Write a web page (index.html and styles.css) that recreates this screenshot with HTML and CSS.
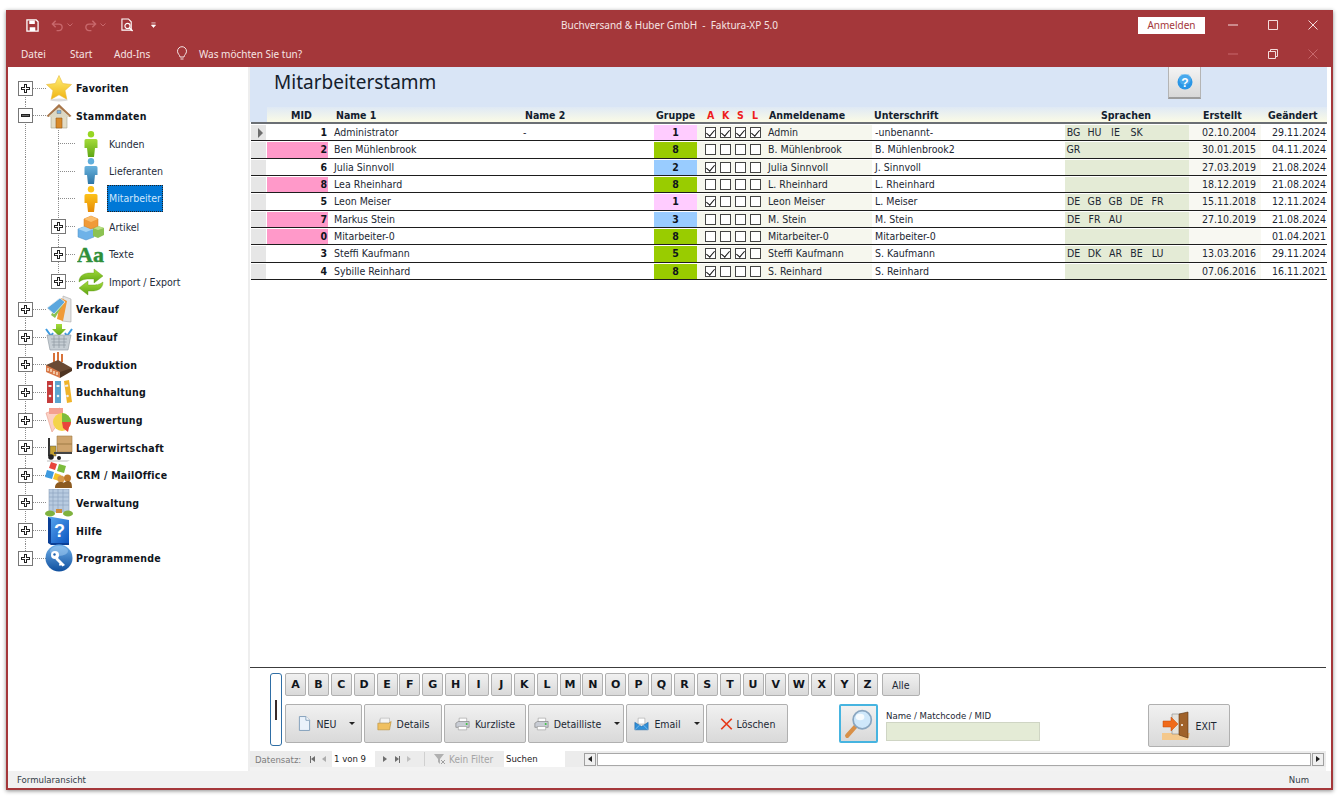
FILE: index.html
```html
<!DOCTYPE html>
<html lang="de">
<head>
<meta charset="utf-8">
<title>Faktura-XP 5.0</title>
<link rel="stylesheet" href="styles.css">
</head>
<body>
<svg class="defs" width="0" height="0" aria-hidden="true">
  <defs>
    <linearGradient id="gGold" x1="0" y1="0" x2="0" y2="1"><stop offset="0" stop-color="#fff07a"/><stop offset="1" stop-color="#f0b412"/></linearGradient>
    <linearGradient id="gGreen" x1="0" y1="0" x2="0" y2="1"><stop offset="0" stop-color="#a5dc3a"/><stop offset="1" stop-color="#5ea514"/></linearGradient>
    <linearGradient id="gBlue" x1="0" y1="0" x2="0" y2="1"><stop offset="0" stop-color="#68b2dd"/><stop offset="1" stop-color="#2f76a6"/></linearGradient>
    <linearGradient id="gOrange" x1="0" y1="0" x2="0" y2="1"><stop offset="0" stop-color="#fcc21a"/><stop offset="1" stop-color="#e58a05"/></linearGradient>
    <linearGradient id="gSphere" x1="0" y1="0" x2="0" y2="1"><stop offset="0" stop-color="#6fb0ea"/><stop offset="1" stop-color="#0f4f9e"/></linearGradient>
    <linearGradient id="gBook" x1="0" y1="0" x2="1" y2="1"><stop offset="0" stop-color="#58a8f0"/><stop offset="1" stop-color="#0d54c0"/></linearGradient>
  </defs>
</svg>

<div class="window">
  <header class="titlebar">
    <div class="title-row">
      <div class="qat">
        <svg class="qi qi-save" viewBox="0 0 14 14"><path d="M1 1h10l2 2v10H1z" fill="none" stroke="#fff" stroke-width="1.4"/><path d="M3.5 1.5h6v4h-6zM4 9h6v4H4z" fill="#fff"/></svg>
        <svg class="qi qi-undo" viewBox="0 0 14 14"><path d="M5 2 1.5 5.5 5 9M2 5.5h6.5a3.5 3.5 0 0 1 0 7H6" fill="none" stroke="#c8686c" stroke-width="1.5"/></svg>
        <svg class="qi-caret" viewBox="0 0 6 4"><path d="M.5.5 3 3 5.500.5" fill="none" stroke="#c8686c"/></svg>
        <svg class="qi qi-redo" viewBox="0 0 14 14"><path d="M9 2l3.500 3.500L9 9M12 5.500H5.500a3.500 3.500 0 0 0 0 7H8" fill="none" stroke="#c8686c" stroke-width="1.5"/></svg>
        <svg class="qi-caret" viewBox="0 0 6 4"><path d="M.5.5 3 3 5.500.5" fill="none" stroke="#c8686c"/></svg>
        <svg class="qi qi-prev" viewBox="0 0 14 15"><path d="M1 1h7l3 3v9H1z" fill="none" stroke="#fff" stroke-width="1.200"/><circle cx="7" cy="8.500" r="2.800" fill="none" stroke="#fff" stroke-width="1.200"/><path d="m9 10.500 3.500 3.500" stroke="#fff" stroke-width="1.600"/></svg>
        <svg class="qi-more" viewBox="0 0 6 7"><path d="M.5 1h5M.5 3.500h5L3 6.500z" fill="#fff" stroke="#fff" stroke-width=".8"/></svg>
      </div>
      <div class="app-title">Buchversand &amp; Huber GmbH&nbsp; -&nbsp; Faktura-XP 5.0</div>
      <div class="win-right">
        <span class="signin">Anmelden</span>
        <div class="win-ctrls">
          <svg class="wc" viewBox="0 0 12 12"><path d="M1 6h10" stroke="#f4dcdc"/></svg>
          <svg class="wc" viewBox="0 0 12 12"><path d="M1.500 1.500h9v9h-9z" fill="none" stroke="#f4dcdc"/></svg>
          <svg class="wc" viewBox="0 0 12 12"><path d="m1.500 1.500 9 9m0-9-9 9" stroke="#f4dcdc"/></svg>
        </div>
      </div>
    </div>
    <div class="menu-row">
      <nav class="menu">
        <span class="menu-item m-datei">Datei</span>
        <span class="menu-item m-start">Start</span>
        <span class="menu-item m-add">Add-Ins</span>
        <svg class="bulb" viewBox="0 0 12 15"><path d="M4 11c0-2-2.500-3-2.500-5.800a4.500 4.500 0 0 1 9 0C10.500 8 8 9 8 11zM4.500 13h3" fill="none" stroke="#f4e4e4"/></svg>
        <span class="menu-item">Was möchten Sie tun?</span>
      </nav>
      <div class="win-ctrls">
        <svg class="wc" viewBox="0 0 12 12"><path d="M1 6h10" stroke="#c8686c"/></svg>
        <svg class="wc" viewBox="0 0 12 12"><path d="M1.500 3.500h7v7h-7zM3.500 3.500v-2h7v7h-2" fill="none" stroke="#f4dcdc"/></svg>
        <svg class="wc" viewBox="0 0 12 12"><path d="m1.500 1.500 9 9m0-9-9 9" stroke="#c8686c"/></svg>
      </div>
    </div>
  </header>

  <div class="body-row">
    <aside class="tree">
      <div class="tr first">
        <div class="trunk"><span class="tg plus"></span></div>
        <svg class="ico" viewBox="0 0 28 28"><ellipse cx="14" cy="26" rx="9" ry="1.500" fill="#ddd"/><path d="m14 1.500 3.700 8 8.800 1-6.500 6 1.800 8.700-7.800-4.400-7.800 4.400L8 16.500l-6.500-6 8.800-1z" fill="url(#gGold)" stroke="#e8b83a" stroke-width=".6"/></svg>
        <span class="lbl">Favoriten</span>
      </div>
      <div class="tr">
        <div class="trunk"><span class="tg minus"></span></div>
        <svg class="ico" viewBox="0 0 28 28"><path d="M6 12h16v14H6z" fill="#e2dcc6" stroke="#a9a58e" stroke-width=".6"/><path d="M1.500 14 14 2l12.500 12-2 1L14 5.500 3.500 15z" fill="#a8764a"/><path d="M14 5.500 24 14v1H4v-1z" fill="#dcd8c4"/><path d="M11 16h6v10h-6z" fill="#d98a2a" stroke="#96591a" stroke-width=".6"/><path d="M12 8.500h4v3h-4z" fill="#7ab0dd" stroke="#666" stroke-width=".4"/></svg>
        <span class="lbl">Stammdaten</span>
      </div>

      <div class="tr">
        <div class="trunk line"></div><div class="branch"></div>
        <svg class="person" viewBox="0 0 14 26"><circle cx="7" cy="3.300" r="3.200" fill="#97d623"/><path d="M2 8h10q1.500 0 1.500 1.500V17H11l-1 9H4l-1-9H.5V9.500Q.5 8 2 8z" fill="url(#gGreen)"/></svg>
        <span class="txt">Kunden</span>
      </div>
      <div class="tr">
        <div class="trunk line"></div><div class="branch"></div>
        <svg class="person" viewBox="0 0 14 26"><circle cx="7" cy="3.300" r="3.200" fill="#60aedb"/><path d="M2 8h10q1.500 0 1.500 1.500V17H11l-1 9H4l-1-9H.5V9.500Q.5 8 2 8z" fill="url(#gBlue)"/></svg>
        <span class="txt">Lieferanten</span>
      </div>
      <div class="tr">
        <div class="trunk line"></div><div class="branch"></div>
        <svg class="person" viewBox="0 0 14 26"><circle cx="7" cy="3.300" r="3.200" fill="#fcc21a"/><path d="M2 8h10q1.500 0 1.500 1.500V17H11l-1 9H4l-1-9H.5V9.500Q.5 8 2 8z" fill="url(#gOrange)"/></svg>
        <span class="txt selected">Mitarbeiter</span>
      </div>
      <div class="tr">
        <div class="trunk line"></div><div class="branch tgcell"><span class="tg plus"></span></div>
        <svg class="ico ico2" viewBox="0 0 28 28"><path d="M1 16 9 13l8 3v8l-8 3-8-3z" fill="#6eb2e8" stroke="#4a8cc4" stroke-width=".5"/><path d="m1 16 8 3 8-3-8-3z" fill="#a6d4f4"/><path d="m16 15 5-2 6 2v7l-6 3-5-2z" fill="#8cc252"/><path d="m16 15 5 2 6-2-6-2z" fill="#bcdf86"/><path d="m7 6 7-3 7 3v7l-7 3-7-3z" fill="#f09a38" stroke="#d07a18" stroke-width=".5"/><path d="m7 6 7 3 7-3-7-3z" fill="#fbbd6a"/></svg>
        <span class="txt">Artikel</span>
      </div>
      <div class="tr">
        <div class="trunk line"></div><div class="branch tgcell"><span class="tg plus"></span></div>
        <svg class="ico ico2" viewBox="0 0 28 28"><text class="aa" x="0" y="22">Aa</text></svg>
        <span class="txt">Texte</span>
      </div>
      <div class="tr">
        <div class="trunk line"></div><div class="branch tgcell last"><span class="tg plus"></span></div>
        <svg class="ico ico2" viewBox="0 0 28 28"><path d="M2 14C2 7 8 5 13 5h4V1l9 7-9 7v-4h-4c-4 0-7 0-11 3z" fill="url(#gGreen)" stroke="#5f9a12" stroke-width=".4"/><path d="M26 14c0 7-6 9-11 9h-4v4l-9-7 9-7v4h4c4 0 7 0 11-3z" fill="url(#gGreen)" stroke="#5f9a12" stroke-width=".4"/></svg>
        <span class="txt">Import / Export</span>
      </div>

      <div class="tr">
        <div class="trunk"><span class="tg plus"></span></div>
        <svg class="ico" viewBox="0 0 28 28"><path d="M18 1l8 3v23l-9-1z" fill="#e4e4e4" stroke="#aaa" stroke-width=".6"/><path d="m16 3 6 3-4 20-6-2z" fill="#f09a38"/><path d="m14 5 5 3-9 15-4-3z" fill="#8cc252"/><path d="M15 3 20 7 9 19 2 13z" fill="#5ba7de" stroke="#eee" stroke-width=".8"/></svg>
        <span class="lbl">Verkauf</span>
      </div>
      <div class="tr">
        <div class="trunk"><span class="tg plus"></span></div>
        <svg class="ico" viewBox="0 0 28 28"><path d="m1 6 5 7 2-3M27 6l-5 7-2-3" fill="none" stroke="#3d9ae0" stroke-width="2"/><path d="M11 1h6v5h4l-7 7-7-7h4z" fill="url(#gGreen)"/><path d="M2 12h24l-3 15H5z" fill="#c6ced4" stroke="#8b959d" stroke-width=".6"/><path d="M6 16h16M6.500 19h15M7 22h14M9 13v12m5-12v12m5-12v12" stroke="#8e98a0" stroke-width=".7"/></svg>
        <span class="lbl">Einkauf</span>
      </div>
      <div class="tr">
        <div class="trunk"><span class="tg plus"></span></div>
        <svg class="ico" viewBox="0 0 28 28"><path d="M8 2h2v9H8zm4-1h2v9h-2zm4 2h2v8h-2z" fill="#d8733a"/><path d="m1 14 12-5 14 8-12 8-14-5z" fill="#6a4a34"/><path d="M1 14v7l14 6v-6z" fill="#d87a4a"/><path d="m15 27 12-7v-3l-12 4z" fill="#4f3523"/><path d="M3 17v3m3-2v3m3-1v3m3-2v3" stroke="#fbe4c8" stroke-width="1.400"/></svg>
        <span class="lbl">Produktion</span>
      </div>
      <div class="tr">
        <div class="trunk"><span class="tg plus"></span></div>
        <svg class="ico" viewBox="0 0 28 28"><path d="M2 3h6v22H2z" fill="#c43c3c"/><path d="M10 3h6v22h-6z" fill="#5ba4cf"/><path d="m19 3 5-1 3 22-5 1z" fill="#f0b428"/><path d="M3.500 7h3v2h-3zM11.500 7h3v2h-3zM20 7l3-.500.300 2-3 .500z" fill="#eee"/><circle cx="5" cy="18" r="1.300" fill="#eee"/><circle cx="13" cy="18" r="1.300" fill="#eee"/><circle cx="22.500" cy="18" r="1.300" fill="#eee"/></svg>
        <span class="lbl">Buchhaltung</span>
      </div>
      <div class="tr">
        <div class="trunk"><span class="tg plus"></span></div>
        <svg class="ico" viewBox="0 0 28 28"><path d="m1 7 14-5 3 9-11 15z" fill="#fbd0c4" stroke="#e89a88" stroke-width=".6"/><path d="M4 2h14v6H4z" fill="#f4a090"/><circle cx="17" cy="16" r="9" fill="#f4d44a"/><path d="M17 16V7a9 9 0 0 1 9 9z" fill="#7cbc3c"/><path d="M17 16h9a9 9 0 0 1-2 5.500l-1 4.500-5-4z" fill="#e8453c"/></svg>
        <span class="lbl">Auswertung</span>
      </div>
      <div class="tr">
        <div class="trunk"><span class="tg plus"></span></div>
        <svg class="ico" viewBox="0 0 28 28"><path d="M2 26h23l-3 2H2z" fill="#ddd"/><path d="M12 2h15v8H12zM12 10h15v8H12z" fill="#cfa56e" stroke="#a37c48" stroke-width=".6"/><path d="M3 4h2v18H3z" fill="#333"/><path d="M5 12h6v10H5z" fill="#c4a030" stroke="#555" stroke-width=".5"/><path d="M9 18h18v2H9z" fill="#444"/><circle cx="6" cy="23" r="2.800" fill="#222"/><circle cx="14" cy="24" r="2" fill="#222"/></svg>
        <span class="lbl">Lagerwirtschaft</span>
      </div>
      <div class="tr">
        <div class="trunk"><span class="tg plus"></span></div>
        <svg class="ico" viewBox="0 0 28 28"><path d="m6 1 6 2-2 6-6-2z" fill="#e8453c"/><path d="m14 3 7 2-2 7-7-2z" fill="#7cbc3c"/><path d="m2 9 7 2-2 7-7-2z" fill="#3d9ae0"/><path d="m10 12 6 2-2 6-6-2z" fill="#f4c428"/><circle cx="16" cy="18" r="3.500" fill="#d89a4a"/><circle cx="22.500" cy="17" r="3.500" fill="#c07a2a"/><path d="M10 27c0-5 3-6 6-6s4 1 4 6zM17 27c0-5 3-7 6-7s4 2 4 7z" fill="#8c5a20"/></svg>
        <span class="lbl">CRM / MailOffice</span>
      </div>
      <div class="tr">
        <div class="trunk"><span class="tg plus"></span></div>
        <svg class="ico" viewBox="0 0 28 28"><path d="M4 0h20v23H4z" fill="#b8cbe0" stroke="#8ea2b8" stroke-width=".6"/><path d="M8 0v22m5-22v22m5-22v22M4 4h20M4 8h20M4 12h20M4 16h20" stroke="#8da5c0" stroke-width=".7"/><path d="M11 20h6v4h-6z" fill="#cf8a3a"/><ellipse cx="5" cy="24.500" rx="5" ry="3" fill="#7fb23f"/><ellipse cx="23" cy="24.500" rx="5" ry="3" fill="#7fb23f"/></svg>
        <span class="lbl">Verwaltung</span>
      </div>
      <div class="tr">
        <div class="trunk"><span class="tg plus"></span></div>
        <svg class="ico" viewBox="0 0 28 28"><path d="M3 0h4l17 3v23L3 26z" fill="url(#gBook)"/><path d="M3 0v26l3 2h18v-2H6V2z" fill="#0a3f96"/><text class="qm" x="9" y="20">?</text></svg>
        <span class="lbl">Hilfe</span>
      </div>
      <div class="tr lastrow">
        <div class="trunk"><span class="tg plus"></span></div>
        <svg class="ico" viewBox="0 0 28 28"><circle cx="14" cy="14" r="13.500" fill="url(#gSphere)"/><ellipse cx="14" cy="7" rx="9" ry="5" fill="#a8d0f4" opacity=".5"/><circle cx="10" cy="11" r="4" fill="#fff"/><path d="m12 13 8 8-2.500 1.500-1.500-1.500-1 1-1-1 .5-1.500-4-4z" fill="#fff"/><circle cx="9.500" cy="10.500" r="1.200" fill="#1c62b0"/></svg>
        <span class="lbl">Programmende</span>
      </div>
    </aside>

    <main class="main">
      <section class="band">
        <div class="band-top">
          <h1 class="page-title">Mitarbeiterstamm</h1>
          <button class="help-btn"><svg class="help-ico" viewBox="0 0 16 16"><circle cx="8" cy="8" r="7.500" fill="#2a96e6"/><circle cx="8" cy="5" r="6" fill="#66bcf4" opacity=".5"/><text class="help-q" x="8" y="12.500">?</text></svg></button>
        </div>
        <div class="row head">
          <span class="c-sel-h"></span>
          <span class="hd h-mid">MID</span>
          <span class="hd h-n1">Name 1</span>
          <span class="hd h-n2">Name 2</span>
          <span class="hd h-grp">Gruppe</span>
          <span class="hd h-aksl"><b>A</b><b>K</b><b>S</b><b>L</b></span>
          <span class="hd h-an">Anmeldename</span>
          <span class="hd h-un">Unterschrift</span>
          <span class="hd h-sp">Sprachen</span>
          <span class="hd h-er">Erstellt</span>
          <span class="hd h-ge">Geändert</span>
        </div>
      </section>

      <section class="table">
        <div class="row data">
          <span class="c-sel"><i class="arrow"></i></span><span class="c-mid">1</span><span class="c-n1">Administrator</span><span class="c-n2">-</span><span class="c-grp g-p">1</span>
          <span class="c-cb"><i class="cb on"></i><i class="cb on"></i><i class="cb on"></i><i class="cb on"></i></span><span class="c-an">Admin</span><span class="c-un">-unbenannt-</span>
          <span class="c-sp"><em>BG</em><em>HU</em><em>IE</em><em>SK</em></span><span class="c-er">02.10.2004</span><span class="c-ge">29.11.2024</span>
        </div>
        <div class="row data">
          <span class="c-sel"></span><span class="c-mid pink">2</span><span class="c-n1">Ben Mühlenbrook</span><span class="c-n2"></span><span class="c-grp g-g">8</span>
          <span class="c-cb"><i class="cb"></i><i class="cb"></i><i class="cb"></i><i class="cb"></i></span><span class="c-an">B. Mühlenbrook</span><span class="c-un">B. Mühlenbrook2</span>
          <span class="c-sp"><em>GR</em></span><span class="c-er">30.01.2015</span><span class="c-ge">04.11.2024</span>
        </div>
        <div class="row data">
          <span class="c-sel"></span><span class="c-mid">6</span><span class="c-n1">Julia Sinnvoll</span><span class="c-n2"></span><span class="c-grp g-b">2</span>
          <span class="c-cb"><i class="cb on"></i><i class="cb"></i><i class="cb"></i><i class="cb"></i></span><span class="c-an">Julia Sinnvoll</span><span class="c-un">J. Sinnvoll</span>
          <span class="c-sp"></span><span class="c-er">27.03.2019</span><span class="c-ge">21.08.2024</span>
        </div>
        <div class="row data">
          <span class="c-sel"></span><span class="c-mid pink">8</span><span class="c-n1">Lea Rheinhard</span><span class="c-n2"></span><span class="c-grp g-g">8</span>
          <span class="c-cb"><i class="cb"></i><i class="cb"></i><i class="cb"></i><i class="cb"></i></span><span class="c-an">L. Rheinhard</span><span class="c-un">L. Rheinhard</span>
          <span class="c-sp"></span><span class="c-er">18.12.2019</span><span class="c-ge">21.08.2024</span>
        </div>
        <div class="row data">
          <span class="c-sel"></span><span class="c-mid">5</span><span class="c-n1">Leon Meiser</span><span class="c-n2"></span><span class="c-grp g-p">1</span>
          <span class="c-cb"><i class="cb on"></i><i class="cb"></i><i class="cb"></i><i class="cb"></i></span><span class="c-an">Leon Meiser</span><span class="c-un">L. Meiser</span>
          <span class="c-sp"><em>DE</em><em>GB</em><em>GB</em><em>DE</em><em>FR</em></span><span class="c-er">15.11.2018</span><span class="c-ge">12.11.2024</span>
        </div>
        <div class="row data">
          <span class="c-sel"></span><span class="c-mid pink">7</span><span class="c-n1">Markus Stein</span><span class="c-n2"></span><span class="c-grp g-b">3</span>
          <span class="c-cb"><i class="cb"></i><i class="cb"></i><i class="cb"></i><i class="cb"></i></span><span class="c-an">M. Stein</span><span class="c-un">M. Stein</span>
          <span class="c-sp"><em>DE</em><em>FR</em><em>AU</em></span><span class="c-er">27.10.2019</span><span class="c-ge">21.08.2024</span>
        </div>
        <div class="row data">
          <span class="c-sel"></span><span class="c-mid pink">0</span><span class="c-n1">Mitarbeiter-0</span><span class="c-n2"></span><span class="c-grp g-g">8</span>
          <span class="c-cb"><i class="cb"></i><i class="cb"></i><i class="cb"></i><i class="cb"></i></span><span class="c-an">Mitarbeiter-0</span><span class="c-un">Mitarbeiter-0</span>
          <span class="c-sp"></span><span class="c-er"></span><span class="c-ge">01.04.2021</span>
        </div>
        <div class="row data">
          <span class="c-sel"></span><span class="c-mid">3</span><span class="c-n1">Steffi Kaufmann</span><span class="c-n2"></span><span class="c-grp g-g">5</span>
          <span class="c-cb"><i class="cb on"></i><i class="cb on"></i><i class="cb on"></i><i class="cb"></i></span><span class="c-an">Steffi Kaufmann</span><span class="c-un">S. Kaufmann</span>
          <span class="c-sp"><em>DE</em><em>DK</em><em>AR</em><em>BE</em><em>LU</em></span><span class="c-er">13.03.2016</span><span class="c-ge">29.11.2024</span>
        </div>
        <div class="row data">
          <span class="c-sel"></span><span class="c-mid">4</span><span class="c-n1">Sybille Reinhard</span><span class="c-n2"></span><span class="c-grp g-g">8</span>
          <span class="c-cb"><i class="cb on"></i><i class="cb"></i><i class="cb"></i><i class="cb"></i></span><span class="c-an">S. Reinhard</span><span class="c-un">S. Reinhard</span>
          <span class="c-sp"></span><span class="c-er">07.06.2016</span><span class="c-ge">16.11.2021</span>
        </div>
      </section>

      <section class="toolbar">
        <div class="handle"><i></i></div>
        <div class="tool-stack">
          <div class="alpha">
            <button class="ab">A</button><button class="ab">B</button><button class="ab">C</button><button class="ab">D</button><button class="ab">E</button><button class="ab">F</button><button class="ab">G</button><button class="ab">H</button><button class="ab">I</button><button class="ab">J</button><button class="ab">K</button><button class="ab">L</button><button class="ab">M</button><button class="ab">N</button><button class="ab">O</button><button class="ab">P</button><button class="ab">Q</button><button class="ab">R</button><button class="ab">S</button><button class="ab">T</button><button class="ab">U</button><button class="ab">V</button><button class="ab">W</button><button class="ab">X</button><button class="ab">Y</button><button class="ab">Z</button>
            <button class="ab-all">Alle</button>
          </div>
          <div class="actions">
            <div class="cmds">
              <button class="cmd w-neu"><svg class="ci" viewBox="0 0 14 16"><path d="M1.500.500h7l4 4v11h-11z" fill="#eaf2fb" stroke="#7f9db9"/><path d="M8.500.500v4h4" fill="#fff" stroke="#7f9db9"/></svg>NEU<i class="dd"></i></button>
              <button class="cmd w-det"><svg class="ci2" viewBox="0 0 18 16"><path d="M3 3h11v6H3z" fill="#fff" stroke="#999" stroke-width=".5"/><path d="M4 1h11v6H4z" fill="#f4f4f4" stroke="#999" stroke-width=".5"/><path d="M1 7h13l3-2-2 10H1z" fill="#f0c060" stroke="#b08020" stroke-width=".6"/></svg>Details</button>
              <button class="cmd w-kur"><svg class="ci2" viewBox="0 0 18 16"><path d="M5 1h9v5H5z" fill="#fff" stroke="#888" stroke-width=".6"/><path d="M1 7l3-2h13v7H1z" fill="#c8ccd4" stroke="#666" stroke-width=".6"/><path d="M4 11h10v4H4z" fill="#fff" stroke="#888" stroke-width=".6"/><path d="M13 7h2v2h-2z" fill="#2ec02e"/></svg>Kurzliste</button>
              <button class="cmd w-dl"><svg class="ci2" viewBox="0 0 18 16"><path d="M5 1h9v5H5z" fill="#fff" stroke="#888" stroke-width=".6"/><path d="M1 7l3-2h13v7H1z" fill="#c8ccd4" stroke="#666" stroke-width=".6"/><path d="M4 11h10v4H4z" fill="#fff" stroke="#888" stroke-width=".6"/><path d="M13 7h2v2h-2z" fill="#2ec02e"/></svg>Detailliste<i class="dd"></i></button>
              <button class="cmd w-em"><svg class="ci2" viewBox="0 0 18 16"><path d="M5 1h8v7H5z" fill="#fff" stroke="#888" stroke-width=".5"/><path d="M1 6l8 5 8-5v9H1z" fill="#2f8fd8" stroke="#1b5f9c" stroke-width=".6"/><path d="m1 15 6-6m10 6-6-6" stroke="#9ed0f4" stroke-width=".8"/></svg>Email<i class="dd"></i></button>
              <button class="cmd w-lo"><svg class="ci2" viewBox="0 0 16 16"><path d="M2 2 14 14M14 2 2 14" stroke="#e63a1a" stroke-width="2"/></svg>Löschen</button>
            </div>
            <button class="search-btn"><svg class="mag" viewBox="0 0 28 28"><path d="M3 25 11 16" stroke="#d89048" stroke-width="4" stroke-linecap="round"/><circle cx="17" cy="10" r="8.500" fill="#cfe8fb" stroke="#8aa6c0" stroke-width="1.600"/><ellipse cx="15" cy="7.500" rx="4" ry="3" fill="#fff" opacity=".8"/></svg></button>
            <div class="field">
              <label class="field-lbl">Name / Matchcode / MID</label>
              <div class="field-box"></div>
            </div>
            <button class="exit-btn"><svg class="door" viewBox="0 0 30 30"><path d="M0 22h28l-2 7H0z" fill="#f4c88c"/><path d="M10 3h12v20H10z" fill="#e4e2dc" stroke="#888" stroke-width=".6"/><path d="m17 3 9-2v26l-9-3z" fill="#a0622a" stroke="#5e3510" stroke-width=".6"/><circle cx="20" cy="14" r="1" fill="#fff"/><path d="M1 10h8V6l7 7-7 7v-4H1z" fill="#f06a1a" stroke="#c04a08" stroke-width=".5"/></svg>EXIT</button>
          </div>
        </div>
      </section>

      <section class="navbar">
        <span class="nav-lbl">Datensatz:</span>
        <span class="nv nv-first"></span><span class="nv nv-prev"></span>
        <span class="nav-cur">1 von 9</span>
        <span class="nv nv-next"></span><span class="nv nv-last"></span><span class="nv nv-new"></span>
        <span class="nav-filter"><svg class="funnel" viewBox="0 0 14 12"><path d="M1 1h10L7 6v5L5 9V6z" fill="#b0b0b0"/><path d="m8 7 4 4m0-4-4 4" stroke="#a0a0a0"/></svg>Kein Filter</span>
        <span class="nav-search">Suchen</span>
        <div class="hscroll"><span class="sb sb-l"></span><span class="track"></span><span class="sb sb-r"></span></div>
      </section>
    </main>
  </div>

  <footer class="status"><span>Formularansicht</span><span class="num">Num</span></footer>
</div>
</body>
</html>
```

FILE: styles.css
```css
* { box-sizing: border-box; }
html, body { margin: 0; padding: 0; }
body { width: 1340px; height: 799px; background: #fff; overflow: hidden; padding: 10px 7px 9px 6px; font-family: "DejaVu Sans Condensed", "DejaVu Sans", sans-serif; font-size: 10.5px; color: #1c2733; }
.defs { display: block; height: 0; }
.window { height: 780px; display: flex; flex-direction: column; background: #fff; border: 2px solid #a4373a; border-top: 0; box-shadow: 0 1px 4px rgba(0,0,0,.45); }

/* title bar */
.titlebar { height: 57px; margin: 0 -2px; background: #a4373a; color: #f6e4e4; font-family: "Noto Sans", sans-serif; font-size: 10px; flex: none; }
.title-row { height: 30px; display: grid; grid-template-columns: 1fr auto 1fr; align-items: center; }
.qat { display: flex; align-items: center; padding-left: 20px; }
.qi { width: 13px; height: 13px; flex: none; }
.qi-undo { margin-left: 12px; }
.qi-redo { margin-left: 11px; }
.qi-prev { margin-left: 15px; height: 14px; }
.qi-caret { width: 6px; height: 4px; margin-left: 3px; flex: none; }
.qi-more { width: 5px; height: 6px; margin-left: 17px; }
.app-title { white-space: nowrap; }
.win-right { display: flex; align-items: center; justify-content: flex-end; }
.signin { width: 67px; height: 17px; line-height: 17px; background: #fff; color: #a4373a; text-align: center; margin-right: 8px; }
.win-ctrls { display: flex; width: 120px; flex: none; }
.wc { width: 12px; height: 12px; margin: 0 14px; }
.menu-row { height: 27px; display: flex; align-items: center; justify-content: space-between; }
.menu { display: flex; align-items: center; padding-left: 15px; }
.m-datei { width: 49px; }
.m-start { width: 44px; }
.m-add { width: 62px; }
.bulb { width: 12px; height: 15px; margin-right: 11px; }

/* layout */
.body-row { flex: 1; display: flex; min-height: 0; }

/* tree */
.tree { width: 242px; flex: none; padding-top: 7.5px; border-right: 2px solid #eeeeee; }
.tr { height: 27.65px; display: flex; align-items: center; font-size: 10.5px; }
.trunk { width: 38px; height: 100%; flex: none; display: flex; align-items: center; padding-left: 10px;
  background:
    repeating-linear-gradient(to bottom, #8c8c8c 0 1px, transparent 1px 2px) 17px 0 / 1px 100% no-repeat,
    repeating-linear-gradient(to right, #8c8c8c 0 1px, transparent 1px 2px) 17px 50% / 21px 1px no-repeat; }
.trunk.line { background: repeating-linear-gradient(to bottom, #8c8c8c 0 1px, transparent 1px 2px) 17px 0 / 1px 100% no-repeat; }
.first .trunk { background:
    repeating-linear-gradient(to bottom, #8c8c8c 0 1px, transparent 1px 2px) 17px 100% / 1px 50% no-repeat,
    repeating-linear-gradient(to right, #8c8c8c 0 1px, transparent 1px 2px) 17px 50% / 21px 1px no-repeat; }
.lastrow .trunk { background:
    repeating-linear-gradient(to bottom, #8c8c8c 0 1px, transparent 1px 2px) 17px 0 / 1px 50% no-repeat,
    repeating-linear-gradient(to right, #8c8c8c 0 1px, transparent 1px 2px) 17px 50% / 21px 1px no-repeat; }
.branch { width: 38px; height: 100%; flex: none;
  background:
    repeating-linear-gradient(to bottom, #8c8c8c 0 1px, transparent 1px 2px) 12px 0 / 1px 100% no-repeat,
    repeating-linear-gradient(to right, #8c8c8c 0 1px, transparent 1px 2px) 12px 50% / 18px 1px no-repeat; }
.tgcell { width: 32px; display: flex; align-items: center; padding-left: 5px; }
.tgcell.last { background:
    repeating-linear-gradient(to bottom, #8c8c8c 0 1px, transparent 1px 2px) 12px 0 / 1px 50% no-repeat,
    repeating-linear-gradient(to right, #8c8c8c 0 1px, transparent 1px 2px) 12px 50% / 18px 1px no-repeat; }
.tg { width: 15px; height: 15px; flex: none; border: 1px solid #777; background-color: #fff; display: block;
  background-repeat: no-repeat; background-position: center; }
.tg.plus { background-image: linear-gradient(#fff, #fff), linear-gradient(#fff, #fff), linear-gradient(#222, #222), linear-gradient(#222, #222); background-size: 7px 1px, 1px 7px, 9px 3px, 3px 9px; }
.tg.minus { background-image: linear-gradient(#666, #666), linear-gradient(#222, #222); background-size: 7px 1px, 9px 3px; }
.ico { width: 28px; height: 28px; flex: none; margin: 0 3px 0 -1px; }
.ico2 { margin: 0 4px 0 -1px; }
.person { width: 14px; height: 26px; flex: none; margin-right: 11px; }
.lbl { font-weight: 700; color: #10151c; letter-spacing: .25px; white-space: nowrap; }
.txt { color: #252c3c; }
.selected { background: #0078d7; color: #cfe6fb; height: 27px; line-height: 25px; margin-left: -2px; padding: 0 1px; border: 1px dotted #222; }
.aa { font-family: "Liberation Serif", serif; font-weight: 700; font-size: 22px; fill: #2f8f3a; stroke: #2f8f3a; stroke-width: .4px; }
.qm { font-family: "Liberation Sans", sans-serif; font-weight: 700; font-size: 18px; fill: #fff; }

/* main */
.main { flex: 1; min-width: 0; display: flex; flex-direction: column; padding-right: 4px; }
.band { background: #d9e5f6; height: 55px; flex: none; display: flex; flex-direction: column; }
.band-top { height: 40px; display: flex; justify-content: space-between; align-items: flex-start; padding: 0 126px 0 24px; }
.page-title { margin: 3px 0 0; font: 400 19px/24px "Noto Sans", sans-serif; color: #14202c; }
.help-btn { width: 33px; height: 32px; padding: 0; border: 1px solid #b4b4b4; border-top: 0; border-bottom: 2px solid #9c9c9c; background: linear-gradient(#f4f4f4, #d8d8d8); display: flex; align-items: center; justify-content: center; }
.help-ico { width: 16px; height: 16px; }
.help-q { font: 700 12px "Liberation Sans", sans-serif; fill: #fff; text-anchor: middle; }
.row { display: grid; grid-template-columns: 16px 61px 192px 134px 43px 65px 110px 193px 124px 72px 66px; margin-left: 1px; }
.head { height: 15px; align-items: center; background: linear-gradient(90deg, #d9e5f6 0 16px, transparent 16px), linear-gradient(#dfe9f5, #fbfbe6); font-weight: 700; color: #12202e; }
.hd { white-space: nowrap; }
.h-mid { padding-left: 24px; }
.h-n1 { padding-left: 8px; }
.h-n2 { padding-left: 5px; }
.h-grp { padding-left: 2px; }
.h-aksl { display: flex; padding-left: 10px; gap: 8px; }
.h-aksl b { color: #ee1c1c; width: 7px; }
.h-an { padding-left: 7px; }
.h-un { padding-left: 2px; }
.h-sp { padding-left: 36px; }
.h-er { padding-left: 14px; }
.h-ge { padding-left: 7px; }

.table { border-top: 2px solid #6b6f74; margin-left: 1px; flex: none; }
.table .row { margin-left: 0; }
.data { height: 17.33px; border-bottom: 1px solid #1d1d1d; padding-top: 1px; line-height: 15px; white-space: nowrap; }
.c-sel { background: #e6e6e6; display: flex; align-items: center; padding-left: 7px; border-right: 1px solid #fff; }
.arrow { width: 0; height: 0; border-style: solid; border-width: 5px 0 5px 5px; border-color: transparent transparent transparent #6e6e6e; }
.c-mid { text-align: right; font-weight: 700; padding-right: 1px; color: #10151c; }
.pink { background: #ff99c9; }
.c-n1 { padding-left: 6px; }
.c-n2 { padding-left: 3px; }
.c-grp { text-align: center; font-weight: 700; color: #10151c; }
.g-p { background: #ffccff; }
.g-g { background: #99cc00; }
.g-b { background: #99ccff; }
.c-cb { display: flex; align-items: center; gap: 4px; padding-left: 8px; background: #f6f7ee; }
.cb { width: 11px; height: 11px; border: 1px solid #444; background: #fff; display: block; }
.cb.on { display: flex; justify-content: center; }
.cb.on::after { content: ""; width: 4px; height: 7px; border: solid #111; border-width: 0 1.5px 1.5px 0; transform: rotate(40deg); display: block; }
.c-an { padding-left: 6px; background: #f6f7ee; }
.c-un { padding-left: 3px; }
.c-sp { background: #e4ebd6; display: flex; }
.c-sp em { font-style: normal; width: 21px; text-align: center; flex: none; }
.c-sp em:first-child { margin-left: -2px; }
.c-er { text-align: right; padding-right: 5px; background: #f8f8f2; }
.c-ge { text-align: right; padding-right: 1px; }

/* toolbar */
.toolbar { margin-top: auto; margin-right: 1px; height: 84px; flex: none; border-top: 1px solid #3c3c3c; display: flex; padding: 5px 0 0 20px; }
.handle { width: 12px; height: 73px; border: 1px solid #2f6ea5; border-radius: 3px; background: #fff; display: flex; align-items: center; justify-content: center; margin-right: 3px; }
.handle i { width: 2px; height: 20px; background: #3b2a2a; display: block; }
.tool-stack { flex: 1; display: flex; flex-direction: column; }
.alpha { display: flex; gap: 1.88px; height: 23px; }
button { font-family: inherit; }
.ab, .ab-all, .cmd, .exit-btn, .search-btn { background: linear-gradient(#f1f1f1, #d9d9d9); border: 1px solid #b0b0b0; border-radius: 2px; padding: 0; color: #1c2733; }
.ab { width: 21px; height: 23px; font: 700 11px "DejaVu Sans", sans-serif; color: #10151c; }
.ab-all { width: 38px; height: 23px; margin-left: 2px; font-size: 10.5px; }
.actions { display: flex; align-items: flex-start; margin-top: 8px; }
.cmds { display: flex; gap: 2px; width: 503px; flex: none; }
.cmd { height: 39px; display: flex; align-items: center; justify-content: center; font-size: 10.5px; flex: none; }
.ci { width: 13px; height: 15px; margin-right: 6px; }
.ci2 { width: 15px; height: 14px; margin-right: 5px; }
.dd { width: 0; height: 0; border: 3px solid transparent; border-top: 3px solid #222; border-bottom: 0; margin-left: 13px; display: block; }
.w-neu { width: 77px; padding-left: 6px; }
.w-det { width: 78px; }
.w-kur { width: 82px; }
.w-dl { width: 96px; padding-left: 2px; }
.w-em { width: 78px; padding-left: 4px; }
.w-lo { width: 82px; }
.w-lo .ci2 { margin-right: 3px; }
.search-btn { width: 39px; height: 39px; margin-left: 51px; border: 2px solid #46b4e0; display: flex; align-items: center; justify-content: center; flex: none; }
.mag { width: 30px; height: 30px; }
.field { width: 154px; margin-left: 8px; padding-top: 6px; flex: none; }
.field-lbl { display: block; font-size: 9.5px; line-height: 12px; white-space: nowrap; }
.field-box { height: 19px; background: #e4ebd6; border: 1px solid #cfd5c4; }
.exit-btn { width: 82px; height: 43px; margin-left: 108px; display: flex; align-items: center; justify-content: center; gap: 4px; font-size: 10.5px; flex: none; }
.door { width: 30px; height: 30px; }

/* nav bar */
.navbar { height: 20px; flex: none; margin-right: 1px; border-bottom: 4px solid #f2f2f2; display: flex; align-items: center; background: #ececec; color: #7c7c7c; font-size: 9.5px; padding-left: 5px; white-space: nowrap; }
.nav-lbl { width: 51px; flex: none; }
.nv { width: 12px; height: 9px; flex: none; display: flex; align-items: center; justify-content: center; }
.nv::after { content: ""; border-style: solid; border-width: 3px 0 3px 4px; border-color: transparent transparent transparent #6e6e6e; }
.nv-first::after, .nv-prev::after { border-width: 3px 4px 3px 0; border-color: transparent #6e6e6e transparent transparent; }
.nv-first::before, .nv-last::after { flex: none; }
.nv-first::before { content: ""; width: 1px; height: 7px; background: #6e6e6e; }
.nv-last::before { content: ""; order: 2; width: 1px; height: 7px; background: #6e6e6e; }
.nv-prev::after { opacity: .5; }
.nv-new::after { opacity: .35; }
.nav-cur { width: 43px; height: 16px; line-height: 15px; background: #fff; color: #222; padding-left: 2px; margin: 0 4px 0 2px; flex: none; }
.nav-filter { width: 80px; height: 14px; display: flex; align-items: center; padding-left: 8px; color: #a4a4a4; margin-left: 9px; border-left: 1px solid #d0d0d0; flex: none; gap: 2px; font-size: 10px; }
.funnel { width: 14px; height: 12px; flex: none; }
.nav-search { width: 61px; height: 16px; line-height: 15px; background: #fff; color: #222; padding-left: 2px; margin-right: 19px; flex: none; }
.hscroll { flex: 1; display: flex; gap: 1px; height: 13px; padding-right: 2px; }
.sb { width: 12px; flex: none; background: #f0f0f0; border: 1px solid #a0a0a0; display: flex; align-items: center; justify-content: center; }
.sb::after { content: ""; border-style: solid; border-width: 3px 0 3px 4px; border-color: transparent transparent transparent #222; }
.sb-l::after { border-width: 3px 4px 3px 0; border-color: transparent #222 transparent transparent; }
.track { flex: 1; background: #fff; border: 1px solid #a8a8a8; }

/* status bar */
.status { height: 17px; flex: none; background: #f1f1f1; display: flex; justify-content: space-between; align-items: center; padding: 0 22px 0 9px; font-size: 9.5px; color: #333c46; }
```
